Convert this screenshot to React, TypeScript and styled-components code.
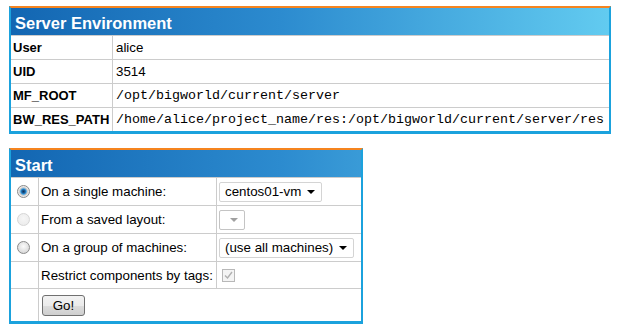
import React from "react";
import styled, { createGlobalStyle } from "styled-components";

const Global = createGlobalStyle`
  html, body { margin: 0; padding: 0; background: #ffffff; }
  body { font-family: "Liberation Sans", Arial, sans-serif; font-size: 13.33px; color: #000; }
`;

const Page = styled.div`
  padding: 6px 0 0 9px;
  display: flex;
  flex-direction: column;
  align-items: flex-start;
  gap: 14px;
`;

const Panel = styled.section<{ $width: number }>`
  width: ${(p) => p.$width}px;
  box-sizing: border-box;
  border-top: 2px solid #f5841f;
  border-left: 2px solid #1ba2dd;
  border-right: 2px solid #1ba2dd;
  border-bottom: 3px solid #1ba2dd;
  background: #fff;
`;

const Header = styled.h2<{ $height: number }>`
  margin: 0;
  height: ${(p) => p.$height}px;
  box-sizing: border-box;
  padding: 3px 0 0 4px;
  line-height: ${(p) => p.$height - 3}px;
  font-size: 16.5px;
  font-weight: bold;
  color: #fff;
  background: linear-gradient(to right, #1366b2 0%, #2c8bcf 45%, #62cbf0 100%);
  background-size: 598px 100%;
  background-repeat: no-repeat;
  border-bottom: 1px solid #cccccc;
`;

const Grid = styled.div<{ $cols: string }>`
  display: grid;
  grid-template-columns: ${(p) => p.$cols};
`;

const Cell = styled.div<{ $h: number; $last?: boolean; $lastRow?: boolean; $span?: number; $pad?: number }>`
  height: ${(p) => p.$h}px;
  box-sizing: content-box;
  display: flex;
  align-items: center;
  padding-left: ${(p) => p.$pad ?? 3}px;
  border-right: ${(p) => (p.$last ? "none" : "1px solid #cccccc")};
  border-bottom: ${(p) => (p.$lastRow ? "none" : "1px solid #cccccc")};
  ${(p) => (p.$span ? `grid-column: span ${p.$span};` : "")}
  white-space: nowrap;
  overflow: hidden;
`;

const Label = styled.span`
  font-weight: bold;
  font-size: 13px;
`;

const Mono = styled.span`
  font-family: "Liberation Mono", "Courier New", monospace;
  font-size: 13.33px;
`;

const Radio = styled.span<{ $checked?: boolean; $disabled?: boolean }>`
  width: 13px;
  height: 13px;
  box-sizing: border-box;
  border-radius: 50%;
  border: 1px solid ${(p) => (p.$disabled ? "#d6d6d6" : "#8a8a8a")};
  background: ${(p) =>
    p.$checked
      ? "radial-gradient(circle at 50% 50%, #0d2f55 0%, #1a5f9c 22%, #3f9fe0 36%, #6ab4e6 40%, #b8b8b8 45%, #e6e6e6 60%, #f8f8f8 100%)"
      : p.$disabled
      ? "radial-gradient(circle at 50% 40%, #f6f6f6 0%, #e9e9e9 100%)"
      : "radial-gradient(circle at 50% 40%, #fbfbfb 0%, #e2e2e2 55%, #cdcdcd 100%)"};
  margin-left: 6px;
`;

const SelectBox = styled.div<{ $width: number; $disabled?: boolean }>`
  width: ${(p) => p.$width}px;
  height: 20px;
  box-sizing: border-box;
  border: 1px solid ${(p) => (p.$disabled ? "#c4c4c4" : "#d4d4d4")};
  border-radius: 2px;
  background: #fff;
  display: flex;
  align-items: center;
  justify-content: space-between;
  padding: 0 6px 0 5px;
  font-size: 13.33px;
`;

const Caret = ({ color }: { color: string }) => (
  <svg width="8" height="4" viewBox="0 0 8 4">
    <path d="M0 0 L8 0 L4 4 Z" fill={color} />
  </svg>
);

const Check = styled.span`
  width: 13px;
  height: 13px;
  box-sizing: border-box;
  border: 1px solid #b8b8b8;
  background: #f4f4f4;
  display: flex;
  align-items: center;
  justify-content: center;
  margin-left: 3px;
`;

const GoButton = styled.button`
  width: 43px;
  height: 21px;
  box-sizing: border-box;
  padding: 0;
  border: 1px solid #707070;
  border-radius: 3px;
  background: linear-gradient(to bottom, #f2f2f2 0%, #ebebeb 50%, #dddddd 51%, #cfcfcf 100%);
  font-family: "Liberation Sans", Arial, sans-serif;
  font-size: 13.33px;
  color: #000;
  margin-left: 1px;
`;

const envRows: { k: string; v: string; mono?: boolean }[] = [
  { k: "User", v: "alice" },
  { k: "UID", v: "3514" },
  { k: "MF_ROOT", v: "/opt/bigworld/current/server", mono: true },
  { k: "BW_RES_PATH", v: "/home/alice/project_name/res:/opt/bigworld/current/server/res", mono: true },
];

export default function App() {
  return (
    <>
      <Global />
      <Page>
        <Panel $width={602}>
          <Header $height={28}>Server Environment</Header>
          <Grid $cols="102px 1fr">
            {envRows.map((r, i) => {
              const lastRow = i === envRows.length - 1;
              return (
                <React.Fragment key={r.k}>
                  <Cell $h={23} $pad={2} $lastRow={lastRow}>
                    <Label>{r.k}</Label>
                  </Cell>
                  <Cell $h={23} $pad={3} $last $lastRow={lastRow}>
                    {r.mono ? <Mono>{r.v}</Mono> : r.v}
                  </Cell>
                </React.Fragment>
              );
            })}
          </Grid>
        </Panel>

        <Panel $width={354}>
          <Header $height={28}>Start</Header>
          <Grid $cols="28px 178px 1fr">
            <Cell $h={27} $pad={0}>
              <Radio $checked />
            </Cell>
            <Cell $h={27} $pad={2}>On a single machine:</Cell>
            <Cell $h={27} $pad={2} $last>
              <SelectBox $width={103}>
                <span>centos01-vm</span>
                <Caret color="#000" />
              </SelectBox>
            </Cell>

            <Cell $h={27} $pad={0}>
              <Radio $disabled />
            </Cell>
            <Cell $h={27} $pad={2}>From a saved layout:</Cell>
            <Cell $h={27} $pad={2} $last>
              <SelectBox $width={26} $disabled>
                <span />
                <Caret color="#a0a0a0" />
              </SelectBox>
            </Cell>

            <Cell $h={27} $pad={0}>
              <Radio />
            </Cell>
            <Cell $h={27} $pad={2}>On a group of machines:</Cell>
            <Cell $h={27} $pad={2} $last>
              <SelectBox $width={135}>
                <span>(use all machines)</span>
                <Caret color="#000" />
              </SelectBox>
            </Cell>

            <Cell $h={26} $pad={0} />
            <Cell $h={26} $pad={2}>Restrict components by tags:</Cell>
            <Cell $h={26} $pad={2} $last>
              <Check>
                <svg width="9" height="9" viewBox="0 0 9 9">
                  <path d="M1 4.5 L3.5 7 L8 1" stroke="#b0b0b0" strokeWidth="1.4" fill="none" />
                </svg>
              </Check>
            </Cell>

            <Cell $h={32} $pad={0} $lastRow />
            <Cell $h={32} $pad={2} $last $lastRow $span={2}>
              <GoButton>Go!</GoButton>
            </Cell>
          </Grid>
        </Panel>
      </Page>
    </>
  );
}
